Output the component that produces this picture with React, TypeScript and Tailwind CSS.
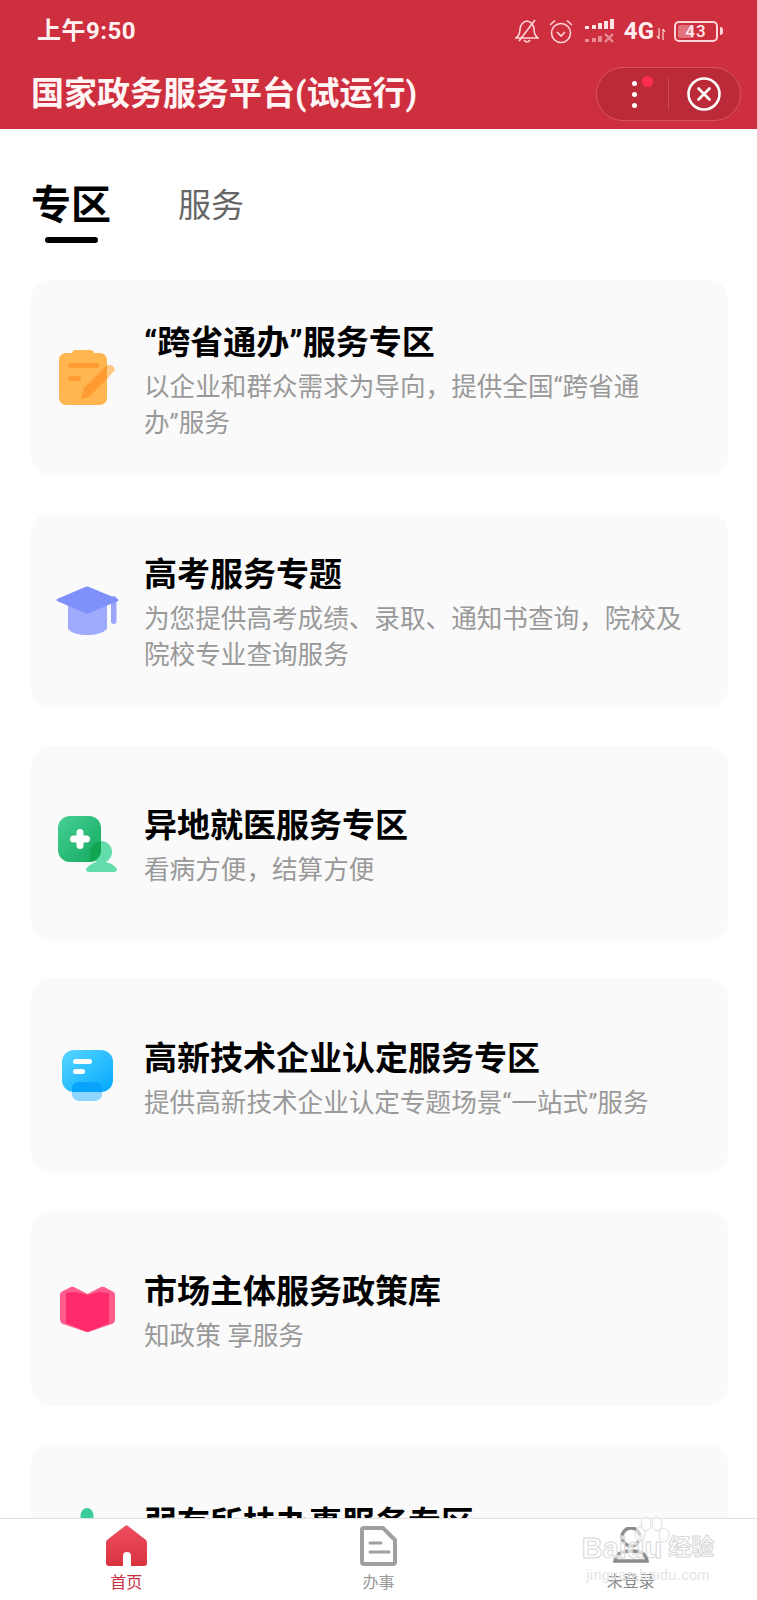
const ClipboardIcon = () => (
  <svg width="56" height="55" viewBox="0 0 56 55" className="-ml-[1px]">
    <rect x="0" y="3" width="48" height="52" rx="7" fill="#ffb650" />
    <rect x="13" y="0" width="22" height="10" rx="4" fill="#ffb650" />
    <rect x="9" y="13" width="31" height="5" rx="2.5" fill="#ff9b33" />
    <rect x="9" y="26" width="13" height="5" rx="2.5" fill="#ff9b33" />
    <path d="M48 15 L52 15 Q55 16 56 20 L48 29 Z" fill="#ffc985" />
    <path d="M22 49 L25 38 L48 15 L48 29 L30 47 Z" fill="#ff9b33" />
  </svg>
);

const HatIcon = () => (
  <svg width="63" height="49" viewBox="0 0 63 49">
    <path d="M12 14 L51 14 L51 43 Q45 49 31 49 Q17 49 12 43 Z" fill="#9eaafb" />
    <rect x="55" y="10" width="5.5" height="28" rx="2.75" fill="#9aa6fb" />
    <path d="M29 1 Q31 0 33 1 L62 13 Q63 14 62 15 L33 27 Q31 28 29 27 L1 15 Q0 14 1 13 Z" fill="#7f90fb" />
  </svg>
);

const MedicalIcon = () => (
  <svg width="59" height="56" viewBox="0 0 59 56" className="mt-[2px]">
    <defs>
      <linearGradient id="medical" x1="0" y1="0" x2="1" y2="1">
        <stop offset="0" stopColor="#45d095" />
        <stop offset="1" stopColor="#14a95f" />
      </linearGradient>
    </defs>
    <circle cx="43" cy="36" r="11" fill="#62dcab" />
    <path d="M28 53 Q33 46 43 45 Q54 46 59 53 Q59 56 56 56 L31 56 Q28 56 28 53 Z" fill="#62dcab" />
    <rect x="0" y="0" width="43" height="46" rx="12" fill="url(#medical)" />
    <path d="M43 25.5 A11 11 0 0 0 32.4 39 Q32.5 46 31 46 A12 12 0 0 0 43 34 Z" fill="#12a552" />
    <rect x="12" y="19.5" width="20" height="7" rx="3.5" fill="#ffffff" />
    <rect x="18.5" y="13" width="7" height="20" rx="3.5" fill="#ffffff" />
  </svg>
);

const ChatIcon = () => (
  <svg width="51" height="51" viewBox="0 0 51 51">
    <defs>
      <linearGradient id="chat" x1="0" y1="0" x2="1" y2="1">
        <stop offset="0" stopColor="#58d6ff" />
        <stop offset="1" stopColor="#04a8ff" />
      </linearGradient>
    </defs>
    <rect x="10" y="32" width="30" height="19" rx="7" fill="#8fd6ff" />
    <rect x="0" y="0" width="51" height="42" rx="12" fill="url(#chat)" />
    <path d="M10 42 L10 39 Q10 32 17 32 L33 32 Q40 32 40 39 L40 42 Z" fill="#08a4fb" />
    <rect x="11" y="9" width="19" height="5" rx="2.5" fill="#ffffff" />
    <rect x="11" y="19" width="12" height="5" rx="2.5" fill="#ffffff" />
  </svg>
);

const BookIcon = () => (
  <svg width="55" height="46" viewBox="0 0 55 46">
    <path d="M3 5 L9 2 Q11 0 14 1 L27.5 8 L41 1 Q44 0 46 2 L52 5 Q55 6 55 9 L55 33 Q55 37 52 38 L30 45.5 Q27.5 46 25 45.5 L3 38 Q0 37 0 33 L0 9 Q0 6 3 5 Z" fill="#ff5c8c" />
    <path d="M6 7 L16 6 L27.5 9 L39 6 L49 7 L49 37 L29 45.5 Q27.5 46 26 45.5 L6 37 Z" fill="#ff2a6c" />
  </svg>
);

const PersonIcon = () => (
  <svg width="30" height="66" viewBox="0 0 30 66">
    <ellipse cx="14" cy="8" rx="6.5" ry="8" fill="#3ccb9b" />
    <path d="M2 50 Q15 24 28 50 Z" fill="#3ccb9b" />
  </svg>
);

const cards = [
  { title: "“跨省通办”服务专区", lines: ["以企业和群众需求为导向，提供全国“跨省通", "办”服务"], icon: <ClipboardIcon /> },
  { title: "高考服务专题", lines: ["为您提供高考成绩、录取、通知书查询，院校及", "院校专业查询服务"], icon: <HatIcon /> },
  { title: "异地就医服务专区", lines: ["看病方便，结算方便"], icon: <MedicalIcon /> },
  { title: "高新技术企业认定服务专区", lines: ["提供高新技术企业认定专题场景“一站式”服务"], icon: <ChatIcon /> },
  { title: "市场主体服务政策库", lines: ["知政策 享服务"], icon: <BookIcon /> },
  { title: "弱有所扶办事服务专区", lines: ["弱有所扶服务"], icon: <PersonIcon /> },
];

const StatusIcons = () => (
  <div className="flex items-center text-white">
    <svg width="24" height="24" viewBox="0 0 24 24" fill="none" stroke="#ffd5d8" strokeWidth="1.6" className="mr-[10px]">
      <path d="M1 19 Q5 16 5 10 Q6 3 12 2 Q18 3 19 10 Q19 16 23 19 Z" />
      <path d="M9 21 Q12 25 15 21" />
      <path d="M20 1 L4 22" />
    </svg>
    <svg width="24" height="25" viewBox="0 0 24 25" fill="none" stroke="#ffd5d8" strokeWidth="1.6" className="mr-[12px]">
      <circle cx="12" cy="14" r="9.5" />
      <path d="M8 13 L12 17 L16 13" />
      <path d="M1 6 L6 1.5 M23 6 L18 1.5" />
    </svg>
    <svg width="30" height="24" viewBox="0 0 30 24" className="mr-[9px]">
      <rect x="0" y="7" width="4" height="3" fill="#ffe3e5" />
      <rect x="7" y="6" width="4" height="4" fill="#ffe3e5" />
      <rect x="13" y="4" width="4" height="6" fill="#ffe3e5" />
      <rect x="19" y="2" width="4" height="8" fill="#ffe3e5" />
      <rect x="25" y="0" width="4" height="10" fill="#ffe3e5" />
      <rect x="0" y="20" width="4" height="3" fill="#e88c95" />
      <rect x="7" y="19" width="4" height="4" fill="#e88c95" />
      <rect x="13" y="17" width="4" height="6" fill="#e88c95" />
      <path d="M20 15 L28 23 M28 15 L20 23" stroke="#e88c95" strokeWidth="2.4" />
    </svg>
    <span className="text-[24px] font-bold leading-none text-[#ffeef0]">4G</span>
    <svg width="10" height="14" viewBox="0 0 10 14" fill="none" stroke="#ffd5d8" strokeWidth="1.2" className="mx-[2px] mt-[6px]">
      <path d="M3 1 L3 12 M1 9 L3 12 M7 13 L7 2 M9 5 L7 2" />
    </svg>
    <div className="relative ml-[6px] flex h-[21px] w-[44px] items-center rounded-[5px] border-2 border-[#ffd5d8]">
      <div className="ml-[2px] h-[13px] w-[16px] rounded-[2px] bg-[#e2737e]" />
      <span className="absolute inset-0 text-center text-[17px] leading-[17px] font-medium tracking-[1px] text-[#ffe9eb]">43</span>
    </div>
    <div className="ml-[2px] h-[8px] w-[3px] rounded-r-sm bg-[#ffd5d8]" />
  </div>
);

const Card = ({ title, lines, icon }: (typeof cards)[number]) => (
  <div className="flex h-[195px] shrink-0 items-center rounded-[20px] bg-[#fafafa]">
    <div className="flex w-[113px] shrink-0 justify-center">{icon}</div>
    <div className="mt-[6px] flex flex-col">
      <p className="text-[33px] leading-[44px] font-bold text-black">{title}</p>
      <div className="mt-[4px] text-[25.6px] leading-[36px] text-[#999999]">
        {lines.map((line) => (
          <p key={line} className="whitespace-nowrap">{line}</p>
        ))}
      </div>
    </div>
  </div>
);

const BaiduMark = () => (
  <div className="pointer-events-none absolute right-[42px] bottom-[16px] flex w-[134px] flex-col items-center">
    <svg width="36" height="30" viewBox="0 0 36 30" fill="#ffffff" fillOpacity="0.6" stroke="#dddddd" strokeWidth="1" className="absolute top-[-15px] left-[53px]">
      <ellipse cx="6" cy="18" rx="5" ry="7" />
      <ellipse cx="12" cy="8" rx="5" ry="7" />
      <ellipse cx="23" cy="8" rx="5" ry="7" />
      <ellipse cx="30" cy="19" rx="5" ry="7" />
    </svg>
    <div className="flex items-center whitespace-nowrap text-[29px] leading-[34px] font-bold text-white/70 [-webkit-text-stroke:1px_#d8d8d8]">
      <span className="font-['Liberation_Sans']">Baidu</span>
      <span className="ml-[6px] text-[23px]">经验</span>
    </div>
    <span className="mt-[1px] whitespace-nowrap font-['Liberation_Sans'] text-[14.5px] leading-[18px] tracking-[0.4px] text-[#e4e4e4]">jingyan.baidu.com</span>
  </div>
);

export default function App() {
  return (
    <div className="relative flex h-[1600px] w-[757px] flex-col overflow-hidden bg-white font-['Roboto','Noto_Sans_CJK_SC',sans-serif]">
      <header className="h-[129px] shrink-0 bg-[#ce2f3e]">
        <div className="flex h-[62px] items-center justify-between pr-[34px] pl-[37px]">
          <span className="text-[24px] font-bold tracking-[0.5px] text-[#fff1f2]">上午9:50</span>
          <StatusIcons />
        </div>
        <div className="flex items-start justify-between pr-[16px] pl-[31px]">
          <h1 className="mt-[9px] text-[33px] leading-[46px] font-bold text-[#fff5f5]">国家政务服务平台(试运行)</h1>
          <div className="relative mt-[5px] flex h-[54px] w-[145px] items-center rounded-full border border-[#d9535f] bg-[#bb2a38]">
            <div className="flex w-[71px] flex-col items-center gap-[6px] pl-[4px]">
              <span className="h-[5px] w-[5px] rounded-full bg-white" />
              <span className="h-[5px] w-[5px] rounded-full bg-white" />
              <span className="h-[5px] w-[5px] rounded-full bg-white" />
            </div>
            <span className="absolute top-[8px] left-[45px] h-[11px] w-[11px] rounded-full bg-[#ff2d4d]" />
            <div className="h-[32px] w-px bg-[#cf4a57]" />
            <svg width="34" height="34" viewBox="0 0 34 34" fill="none" stroke="#ffffff" strokeWidth="2.6" className="ml-[18px]">
              <circle cx="17" cy="17" r="15.5" />
              <path d="M11.5 11.5 L22.5 22.5 M22.5 11.5 L11.5 22.5" strokeLinecap="round" />
            </svg>
          </div>
        </div>
      </header>

      <main className="flex min-h-0 flex-1 flex-col overflow-hidden pr-[29px] pl-[31px]">
        <div className="flex shrink-0 items-start pt-[52px]">
          <div className="flex w-[80px] flex-col items-center">
            <span className="text-[40px] leading-[50px] font-bold text-black">专区</span>
            <span className="mt-[6px] h-[6px] w-[53px] rounded-full bg-black" />
          </div>
          <span className="mt-[4px] ml-[67px] text-[33px] leading-[42px] text-[#666666]">服务</span>
        </div>
        <div className="mt-[37px] flex flex-col gap-[37.8px]">
          {cards.map((card) => (
            <Card key={card.title} {...card} />
          ))}
        </div>
      </main>

      <nav className="relative grid h-[82px] shrink-0 grid-cols-3 border-t border-[#e2e2e2] bg-white">
        <div className="flex flex-col items-center pt-[6px]">
          <svg width="41" height="41" viewBox="0 0 41 41">
            <defs>
              <linearGradient id="home" x1="0" y1="0" x2="0" y2="1">
                <stop offset="0" stopColor="#ef4f60" />
                <stop offset="1" stopColor="#d9323f" />
              </linearGradient>
            </defs>
            <path d="M19 1 Q20.5 -0.5 22 1 L40 15 Q41 16 41 18 L41 38 Q41 41 38 41 L25 41 L25 31 Q25 27 21 27 Q17 27 17 31 L17 41 L3 41 Q0 41 0 38 L0 18 Q0 16 1 15 Z" fill="url(#home)" />
          </svg>
          <span className="mt-[5px] text-[16px] leading-[24px] text-[#c8303f]">首页</span>
        </div>
        <div className="flex flex-col items-center pt-[7px]">
          <svg width="37" height="40" viewBox="0 0 37 40" fill="none" stroke="#a0a0a0" strokeWidth="4" strokeLinejoin="round" strokeLinecap="round">
            <path d="M2 4 Q2 2 4 2 L23 2 L35 14 L35 36 Q35 38 33 38 L4 38 Q2 38 2 36 Z" />
            <path d="M10 17 L21 17" strokeWidth="3" />
            <path d="M10 26 L29 26" strokeWidth="3" />
          </svg>
          <span className="mt-[5px] text-[16px] leading-[24px] text-[#999999]">办事</span>
        </div>
        <div className="flex flex-col items-center pt-[8px]">
          <svg width="38" height="38" viewBox="0 0 38 38" fill="none" stroke="#8c8c8c" strokeWidth="3.5" strokeLinecap="round">
            <circle cx="19" cy="10" r="9" />
            <path d="M3 34 Q4 24 19 24 Q34 24 35 34 Z" />
          </svg>
          <span className="mt-[5px] text-[16px] leading-[24px] text-[#888888]">未登录</span>
        </div>
        <BaiduMark />
      </nav>
    </div>
  );
}
